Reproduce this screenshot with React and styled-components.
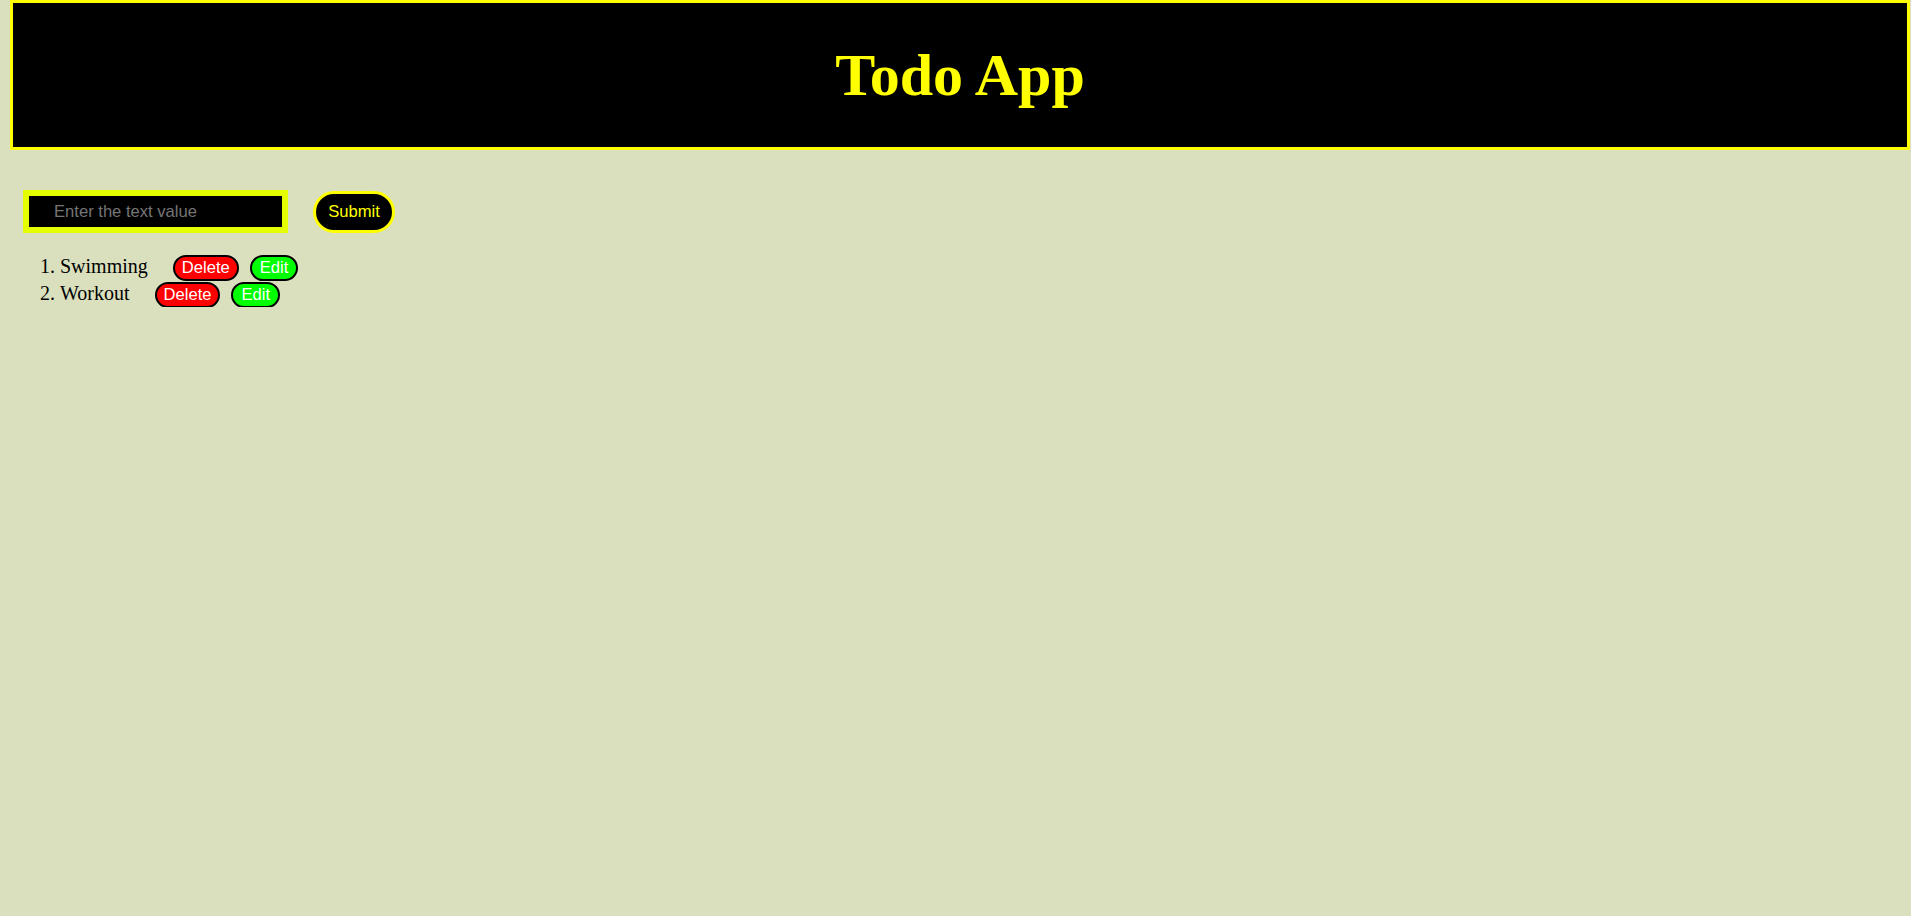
import styled, { createGlobalStyle } from 'styled-components';

const GlobalStyle = createGlobalStyle`
    body {
        margin: 0;
        background: #dae0be;
        font-family: "Liberation Serif", "Times New Roman", serif;
    }
`;

const todos = ["Swimming", "Workout"];

export default function App() {
    return (
        <>
            <GlobalStyle />
            <Header>
                <Title>Todo App</Title>
            </Header>

            <Form onSubmit={(e) => e.preventDefault()}>
                <TextInput type="text" placeholder="Enter the text value" />
                <SubmitButton type="submit">Submit</SubmitButton>
            </Form>

            <TodoList>
                {todos.map((todo) => (
                    <TodoItem key={todo}>
                        {todo}
                        <ActionButton variant="delete">Delete</ActionButton>
                        <ActionButton variant="edit">Edit</ActionButton>
                    </TodoItem>
                ))}
            </TodoList>
        </>
    )
}

const Header = styled.header`
    display: flex;
    align-items: center;
    justify-content: center;
    box-sizing: border-box;
    width: 1900px;
    height: 150px;
    margin-left: 10px;
    background: #000;
    border: 3px solid #ffff00;
`;

const Title = styled.h1`
    margin: 0;
    color: #ffff00;
    font-size: 60px;
    font-weight: bold;
`;

const Form = styled.form`
    display: flex;
    align-items: center;
    gap: 25px;
    margin: 40px 0 0 23px;
`;

const TextInput = styled.input`
    box-sizing: border-box;
    width: 265px;
    height: 43px;
    padding: 0 0 0 25px;
    background: #000;
    border: 6px solid #e6ff00;
    color: #fff;
    font-family: "Liberation Sans", Arial, sans-serif;
    font-size: 16.6px;
    outline: none;

    &::placeholder {
        color: #757575;
    }
`;

const SubmitButton = styled.button`
    box-sizing: border-box;
    width: 82px;
    height: 42px;
    padding: 0;
    background: #000;
    border: 3px solid #ffff00;
    border-radius: 21px;
    color: #ffff00;
    font-family: "Liberation Sans", Arial, sans-serif;
    font-size: 16.6px;
    cursor: pointer;
`;

const TodoList = styled.ol`
    margin: 20px 0 0 20px;
    padding-left: 40px;
    font-size: 20px;
    color: #000;
`;

const TodoItem = styled.li`
    height: 27px;
    line-height: 26px;
`;

const ActionButton = styled.button`
    box-sizing: border-box;
    height: 26px;
    margin-left: ${(props) => props.variant === "delete" ? "25px" : "11px"};
    padding: ${(props) => props.variant === "delete" ? "0 7px" : "0 8px"};
    vertical-align: middle;
    background: ${(props) => props.variant === "delete" ? "#ff0000" : "#00ff00"};
    border: 2px solid #000;
    border-radius: 13px;
    color: #fff;
    font-family: "Liberation Sans", Arial, sans-serif;
    font-size: 16.6px;
    line-height: 20px;
    cursor: pointer;
`;
